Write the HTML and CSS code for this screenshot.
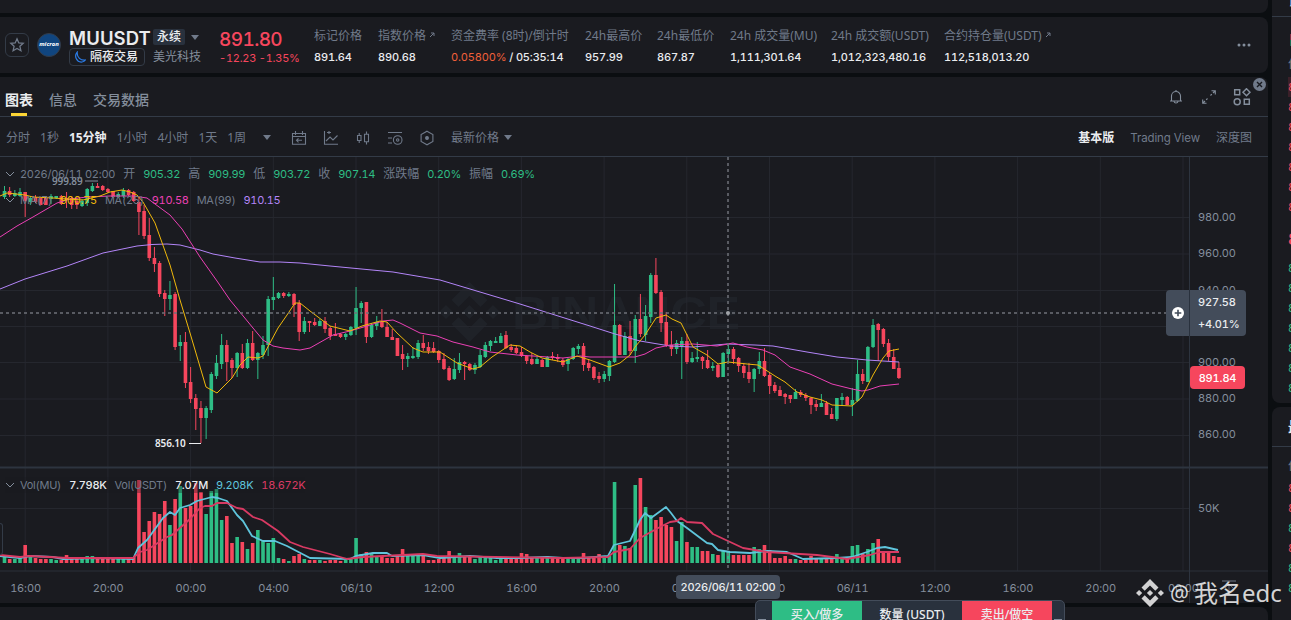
FILE: index.html
```html
<!DOCTYPE html>
<html lang="zh-CN">
<head>
    <meta charset="UTF-8">
    <meta name="viewport" content="width=device-width, initial-scale=1.0">
    <title>MUUSDT 永续 - Futures</title>
    <link rel="stylesheet" href="styles.css">
</head>
<body>
    <div class="page">
        <div class="main">
            <div class="panel top-strip"></div>

            <!-- Ticker -->
            <div class="panel ticker">
                <div class="star-btn">
                    <svg width="16" height="16" viewBox="0 0 16 16"><path d="M8 1.8l1.8 4.1 4.4.4-3.3 3 1 4.4L8 11.4l-3.9 2.3 1-4.4-3.3-3 4.4-.4z" fill="none" stroke="#707a8a" stroke-width="1.3"/></svg>
                </div>
                <div class="coin-logo">micron</div>
                <div class="symbol">
                    <div class="symbol-row">
                        <span class="symbol-name">MUUSDT</span>
                        <span class="badge">永续</span>
                        <span class="caret"></span>
                    </div>
                    <div class="symbol-row second">
                        <span class="night">
                            <svg width="12" height="12" viewBox="0 0 12 12"><path d="M3.2 1.2C-.2 5.2 2.6 11.6 8 11c1.500-.2 2.600-.9 3.400-2C6.800 9.600 2.800 6.600 3.200 1.200z" fill="none" stroke="#2b7de9" stroke-width="1.2"/></svg>
                            隔夜交易
                        </span>
                        <span class="company">美光科技</span>
                    </div>
                </div>
                <div class="price">
                    <div class="price-last">891.80</div>
                    <div class="price-change">-12.23 -1.35%</div>
                </div>
                <div class="stats">
                    <div class="stat"><label>标记价格</label><b>891.64</b></div>
                    <div class="stat"><label>指数价格 <svg class="ext" viewBox="0 0 6 6"><path d="M1 5L5 1M2 1h3v3"/></svg></label><b>890.68</b></div>
                    <div class="stat"><label>资金费率 (8时)/倒计时</label><b><i>0.05800%</i> / 05:35:14</b></div>
                    <div class="stat"><label>24h最高价</label><b>957.99</b></div>
                    <div class="stat"><label>24h最低价</label><b>867.87</b></div>
                    <div class="stat"><label>24h 成交量(MU)</label><b>1,111,301.64</b></div>
                    <div class="stat"><label>24h 成交额(USDT)</label><b>1,012,323,480.16</b></div>
                    <div class="stat"><label>合约持仓量(USDT) <svg class="ext" viewBox="0 0 6 6"><path d="M1 5L5 1M2 1h3v3"/></svg></label><b>112,518,013.20</b></div>
                </div>
                <svg class="more" width="14" height="4" viewBox="0 0 14 4"><circle cx="2" cy="2" r="1.500"/><circle cx="7" cy="2" r="1.500"/><circle cx="12" cy="2" r="1.500"/></svg>
            </div>

            <!-- Chart panel -->
            <div class="panel chart-panel">
                <div class="tabs">
                    <span class="tab active">图表</span>
                    <span class="tab">信息</span>
                    <span class="tab">交易数据</span>
                    <div class="tab-icons">
                        <svg width="16" height="16" viewBox="0 0 16 16"><path d="M2 12h12M3.500 12V7a4.500 4.500 0 0 1 9 0v5M6 12.500c.4 2 3.600 2 4 0M8 1v1.500"/></svg>
                        <svg width="16" height="16" viewBox="0 0 16 16"><path d="M9.500 6.500l1.300-1.300M12 4l2-2M10.500 1.700h3.800v3.800M6.500 9.500l-1.300 1.300M4 12l-2 2M1.700 10.500v3.800h3.800"/></svg>
                        <svg width="18" height="18" viewBox="0 0 18 18"><path d="M1.700 1.700h5v5h-5zM11.300 11.300h5v5h-5zM13.500.7L17 4.200l-3.500 3.500L10 4.200z" stroke-width="1.500"/><circle cx="4.200" cy="13.800" r="3" stroke-width="1.500"/></svg>
                    </div>
                    <div class="close-dot">
                        <svg width="7" height="7" viewBox="0 0 7 7"><path d="M1 1l5 5M6 1L1 6" stroke="#181a20" stroke-width="1.400"/></svg>
                    </div>
                </div>

                <div class="toolbar">
                    <div class="intervals">
                        <span>分时</span><span>1秒</span><span class="on">15分钟</span><span>1小时</span><span>4小时</span><span>1天</span><span>1周</span>
                    </div>
                    <span class="caret"></span>
                    <div class="tools">
                        <svg width="16" height="16" viewBox="0 0 16 16"><path d="M1.500 3.500h13v10.800h-13zM1.500 6.500h13M4.500 1v4M11.500 1v4M11 10.300H5.500M7.500 8.300l-2 2 2 2"/></svg>
                        <svg width="16" height="16" viewBox="0 0 16 16"><path d="M1.500 1v13.300H15M3 11l4-4 3 3 4.500-4.500M4 2.500h4M6 1v3"/></svg>
                        <svg width="16" height="16" viewBox="0 0 16 16"><path d="M2.500 5.500h3.500v5H2.500zM4.200 3v2.500M4.200 10.500V13M9.500 4.200h4v7.600h-4zM11.500 1.500v2.700M11.500 11.800v2.700"/></svg>
                        <svg width="16" height="16" viewBox="0 0 16 16"><path d="M1 2.500h14M1 8h4M1 13h4"/><circle cx="10.700" cy="10" r="4.300"/><circle cx="10.700" cy="10" r="1.200"/></svg>
                        <svg width="16" height="16" viewBox="0 0 16 16"><path d="M8 1.200l5.900 3.400v6.800L8 14.800l-5.900-3.400V4.600z"/><circle cx="8" cy="8" r="1.400" fill="#707a8a"/></svg>
                    </div>
                    <span class="latest">最新价格</span>
                    <span class="caret"></span>
                    <div class="views">
                        <span class="on">基本版</span><span class="latin">Trading View</span><span>深度图</span>
                    </div>
                </div>

                <div class="chart">
                    <svg id="chart" width="1268" height="446" viewBox="0 157 1268 446"></svg>
                    <div class="legend legend-ohlc">
                        <svg class="chev" viewBox="0 0 10 6"><path d="M1 1l4 4 4-4"/></svg>
                        <span>2026/06/11 02:00</span><span class="cn">开</span><em>905.32</em><span class="cn">高</span><em>909.99</em><span class="cn">低</span><em>903.72</em><span class="cn">收</span><em>907.14</em><span class="cn">涨跌幅</span><em>0.20%</em><span class="cn">振幅</span><em>0.69%</em>
                    </div>
                    <div class="legend legend-ma">
                        <svg class="chev" viewBox="0 0 10 6"><path d="M1 1l4 4 4-4"/></svg>
                        <span>MA(7)</span><em class="ma7">900.75</em><span>MA(25)</span><em class="ma25">910.58</em><span>MA(99)</span><em class="ma99">910.15</em>
                    </div>
                    <div class="legend legend-vol">
                        <svg class="chev" viewBox="0 0 10 6"><path d="M1 1l4 4 4-4"/></svg>
                        <span>Vol(MU)</span><em class="white">7.798K</em><span>Vol(USDT)</span><em class="white">7.07M</em><em class="cyan">9.208K</em><em class="crimson">18.672K</em>
                    </div>
                    <div class="side-handle"></div>
                    <div class="cross-price">
                        <div class="plus">
                            <svg width="12" height="12" viewBox="0 0 12 12"><circle cx="6" cy="6" r="6" fill="#fff"/><path d="M6 2.700v6.600M2.700 6h6.600" stroke="#434c5a" stroke-width="1.600"/></svg>
                        </div>
                        <div class="cross-values"><span>927.58</span><span>+4.01%</span></div>
                    </div>
                    <div class="last-price">891.84</div>
                    <div class="cross-time">2026/06/11 02:00</div>
                </div>
            </div>

            <div class="panel bottom-strip"></div>
        </div>

        <!-- Order book, cut off by the window edge -->
        <div class="side">
            <div class="panel book">
                <div class="book-head">订</div>
                <div class="book-mode"><i></i></div>
                <div class="book-label">价格</div>
                <div class="asks"><span class="hit">891</span><span>891</span><span>891</span><span>891</span><span>891</span><span>891</span><span>891</span></div>
                <div class="book-last">891</div>
                <div class="bids"><span>891</span><span>891</span><span>891</span><span>891</span><span>891</span><span>891</span><span>891</span></div>
            </div>
            <div class="panel trades">
                <div class="trades-head">最新成交</div>
                <div class="book-label">价格</div>
                <div class="trade-rows"><span class="r">891</span><span class="r">891</span><span>891</span><span class="r">891</span><span>891</span><span>891</span></div>
            </div>
        </div>
    </div>

    <!-- Quick order bar -->
    <div class="quick-order">
        <div class="grip"></div>
        <div class="buy">买入/做多</div>
        <div class="qty">数量 (USDT)</div>
        <div class="sell">卖出/做空</div>
        <div class="grip end"></div>
    </div>

    <div class="signature">
        <svg width="28" height="28" viewBox="0 0 28 28"><path d="M14 0l8.500 8.500-3.200 3.200L14 6.400l-5.300 5.300-3.200-3.200zM14 28l8.500-8.500-3.200-3.200-5.300 5.300-5.300-5.300-3.200 3.200zM14 10.900l3.100 3.100-3.100 3.100-3.100-3.100zM3.100 10.900L6.200 14l-3.100 3.100L0 14zM24.900 10.900L28 14l-3.100 3.100-3.100-3.100z"/></svg>
        <span class="at">@</span><span>我名edc</span>
    </div>

    <script src="chart.js"></script>
</body>
</html>
```
FILE: styles.css
```css
* {
    box-sizing: border-box;
}

body {
    margin: 0;
    height: 620px;
    overflow: hidden;
    position: relative;
    background: #0b0e11;
    color: #707a8a;
    font-family: "Noto Sans", "Noto Sans CJK SC", sans-serif;
    font-size: 12px;
    line-height: 16px;
}

.page {
    display: flex;
    gap: 4px;
    height: 620px;
}

.main {
    width: 1268px;
    flex: none;
    display: flex;
    flex-direction: column;
    gap: 4px;
}

.panel {
    background: #1a1b20;
    border-radius: 8px;
}

.top-strip {
    height: 13px;
    border-radius: 0 0 8px 0;
    flex: none;
}

/* Numbers and latin text */
.symbol-name,
.price,
.stat b,
.latin,
.legend,
.chart text,
.cross-price,
.last-price,
.cross-time,
.asks,
.bids,
.book-last,
.trade-rows {
    font-family: Inter, "Noto Sans CJK SC", sans-serif;
    font-size: 11px;
    font-variant-numeric: tabular-nums;
    letter-spacing: -0.15px;
}

/* Ticker */
.ticker {
    height: 56px;
    flex: none;
    display: flex;
    align-items: center;
    padding-left: 5px;
    border-radius: 0 8px 8px 0;
    position: relative;
}

.star-btn {
    width: 24px;
    height: 24px;
    border: 1px solid #333b47;
    border-radius: 6px;
    display: flex;
    align-items: center;
    justify-content: center;
}

.coin-logo {
    width: 24px;
    height: 24px;
    margin-left: 8px;
    border-radius: 50%;
    background: #10457f;
    border: 1px solid #333b47;
    color: #fff;
    font-size: 6px;
    font-weight: 700;
    font-style: italic;
    line-height: 21px;
    text-align: center;
}

.symbol {
    margin-left: 8px;
    width: 150px;
    padding-top: 3px;
}

.symbol-row {
    display: flex;
    align-items: center;
    height: 20px;
    white-space: nowrap;
}

.symbol-row.second {
    height: 19px;
    gap: 8px;
    padding-top: 1px;
}

.symbol-name {
    font-size: 18.5px;
    font-weight: 600;
    color: #eaecef;
    width: 84px;
    letter-spacing: 0.1px;
    padding-top: 2px;
}

.badge {
    background: #29313d;
    color: #eaecef;
    font-weight: 500;
    padding: 0 4px;
    border-radius: 2px;
    margin-right: 6px;
}

.caret {
    border: 4px solid transparent;
    border-top: 5px solid #707a8a;
    border-bottom: 0;
}

.night {
    width: 76px;
    height: 18px;
    border: 1px solid #333b47;
    border-radius: 4px;
    display: flex;
    align-items: center;
    gap: 4px;
    padding-left: 4px;
    color: #eaecef;
    font-weight: 500;
}

.company {
    color: #848e9c;
}

.price {
    width: 95px;
    padding-top: 7px;
}

.price-last {
    font-size: 19px;
    line-height: 20px;
    color: #f6465d;
    font-weight: 500;
    letter-spacing: -0.6px;
}

.price-change {
    color: #f6465d;
    line-height: 17px;
    letter-spacing: -0.25px;
    white-space: nowrap;
}

.stats {
    display: grid;
    grid-template-columns: 64px 73px 134px 72px 73px 101px 113px 120px;
}

.stat {
    display: flex;
    flex-direction: column;
    gap: 5px;
    padding-top: 3px;
    white-space: nowrap;
}

.stat b {
    color: #eaecef;
    font-weight: 500;
}

.stat i {
    color: #f0603a;
    font-style: normal;
    font-weight: 400;
}

.ext {
    width: 6px;
    height: 6px;
    fill: none;
    stroke: #707a8a;
    vertical-align: 2px;
}

.more {
    position: absolute;
    right: 17px;
    top: 26px;
    fill: #848e9c;
}

/* Tabs and toolbar */
.chart-panel {
    height: 526px;
    flex: none;
    border-radius: 0 8px 8px 0;
}

.tabs {
    position: relative;
    display: flex;
    height: 40px;
    gap: 16px;
    padding: 0 17px 0 5px;
    border-bottom: 1px solid #333b47;
    font-size: 14px;
    font-weight: 500;
    color: #848e9c;
}

.tab {
    line-height: 45px;
    position: relative;
}

.tab.active {
    color: #eaecef;
    font-weight: 700;
}

.tab.active::after {
    content: "";
    position: absolute;
    left: 6px;
    bottom: 0;
    width: 16px;
    height: 3px;
    background: #fcd535;
}

.tab-icons {
    margin-left: auto;
    display: flex;
    align-items: center;
    gap: 16.5px;
}

.tab-icons svg,
.tools svg {
    fill: none;
    stroke: #848e9c;
    stroke-width: 1.1;
}

.close-dot {
    position: absolute;
    right: 2px;
    top: 1px;
    width: 13px;
    height: 13px;
    border-radius: 50%;
    background: #707a8a;
    display: flex;
    align-items: center;
    justify-content: center;
}

.toolbar {
    height: 40px;
    padding: 2px 16px 0 6px;
    display: flex;
    align-items: center;
    border-bottom: 1px solid #333b47;
    white-space: nowrap;
}

.intervals {
    display: flex;
    gap: 10px;
    width: 257px;
}

.toolbar .on {
    color: #eaecef;
    font-weight: 700;
}

.toolbar .latin {
    font-size: 11.5px;
    letter-spacing: -0.1px;
}

.tools {
    display: flex;
    gap: 16px;
    margin-left: 20px;
}

.tools svg {
    stroke: #707a8a;
}

.latest {
    margin: 0 5px 0 16px;
}

.views {
    display: flex;
    gap: 16px;
    margin-left: auto;
}

/* Chart */
.chart {
    position: relative;
    height: 446px;
}

.chart > svg {
    display: block;
}

.chart text {
    fill: #848e9c;
}

.chart .watermark {
    font-family: "Liberation Sans", sans-serif;
    font-weight: 700;
    font-size: 46px;
    fill: #1f2228;
}

.chart .extreme {
    font-family: "Noto Sans", sans-serif;
    font-size: 10px;
    font-weight: 600;
}

.legend {
    position: absolute;
    left: 5px;
    display: flex;
    align-items: center;
    gap: 8px;
    white-space: nowrap;
    letter-spacing: -0.27px;
}

.legend em {
    font-style: normal;
    color: #2ebd85;
}

.legend .cn {
    font-size: 12px;
    letter-spacing: 0;
}

.legend .chev + span {
    margin-left: -3px;
}

.chev {
    width: 10px;
    height: 6px;
    fill: none;
    stroke: #848e9c;
}

.legend-ohlc {
    top: 9px;
}

.legend-ma {
    top: 35px;
}

.legend-vol {
    top: 320px;
    background: rgba(26, 27, 32, 0.35);
}

.legend .ma7 { color: #f0b90b; }
.legend .ma25 { color: #eb40b5; }
.legend .ma99 { color: #b385f8; }
.legend .cyan { color: #5fc5dc; }
.legend .crimson { color: #d93a63; }

.legend .white {
    color: #eaecef;
    font-weight: 500;
}

.side-handle {
    position: absolute;
    left: 0;
    top: 366px;
    width: 3px;
    height: 32px;
    border: 1px solid #333b47;
    border-left: 0;
    border-radius: 0 4px 4px 0;
}

.cross-price {
    position: absolute;
    left: 1166px;
    top: 133px;
    width: 80px;
    height: 46px;
    border-radius: 4px;
    background: #434c5a;
    display: flex;
    color: #eaecef;
    font-weight: 500;
}

.plus {
    width: 24px;
    display: flex;
    align-items: center;
    justify-content: center;
    border-right: 1px solid #29313d;
}

.cross-values {
    display: flex;
    flex-direction: column;
    line-height: 22px;
    padding: 1px 0 0 8px;
}

.last-price {
    position: absolute;
    left: 1190px;
    top: 209px;
    width: 55px;
    height: 23px;
    border-radius: 4px;
    background: #f6465d;
    color: #fff;
    font-weight: 500;
    line-height: 24px;
    text-align: center;
}

.cross-time {
    position: absolute;
    left: 676px;
    top: 418px;
    width: 104px;
    height: 24px;
    border-radius: 4px;
    background: #434c5a;
    color: #eaecef;
    font-weight: 500;
    line-height: 24px;
    text-align: center;
    white-space: nowrap;
    letter-spacing: -0.3px;
}

.bottom-strip {
    flex: 1;
    border-radius: 0 8px 0 0;
}

/* Order book */
.side {
    width: 19px;
    display: flex;
    flex-direction: column;
    gap: 4px;
    overflow: hidden;
}

.side span,
.side .book-label,
.side .book-last,
.side .book-head,
.side .trades-head {
    display: block;
    padding-left: 16px;
    white-space: nowrap;
    overflow: hidden;
}

.book {
    height: 403px;
    border-radius: 0 0 0 8px;
    flex: none;
}

.book-head {
    height: 17px;
    line-height: 4px;
    border-bottom: 1px solid #333b47;
    color: #eaecef;
}

.book-mode {
    height: 37px;
    padding: 17px 0 0 18px;
}

.book-mode i {
    display: block;
    width: 8px;
    height: 12px;
    background: linear-gradient(#7d2c40 50%, #1d6b52 50%);
}

.book-label {
    height: 23px;
    line-height: 20px;
}

.asks span,
.bids span,
.trade-rows span {
    height: 20px;
    line-height: 21px;
    color: #2ebd85;
}

.asks span,
.trade-rows .r {
    color: #f6465d;
}

.asks .hit {
    background: linear-gradient(90deg, transparent 16px, #3b2029 16px);
}

.book-last {
    height: 41px;
    line-height: 45px;
    font-size: 16px;
    font-weight: 600;
    color: #f6465d;
}

.trades {
    flex: 1;
    border-radius: 8px 0 0 0;
}

.trades-head {
    height: 40px;
    line-height: 40px;
    border-bottom: 1px solid #333b47;
    font-size: 14px;
    font-weight: 700;
    color: #eaecef;
}

.trades .book-label {
    height: 31px;
    line-height: 38px;
}

/* Quick order bar */
.quick-order {
    position: absolute;
    left: 755px;
    top: 600px;
    width: 310px;
    height: 30px;
    display: flex;
    border: 1px solid #434c5a;
    border-radius: 5px 5px 0 0;
    background: #29313d;
    color: #eaecef;
    font-weight: 500;
    line-height: 28px;
    text-align: center;
}

.quick-order .buy {
    width: 90px;
    background: #2ebd85;
}

.quick-order .qty {
    width: 100px;
}

.quick-order .sell {
    width: 90px;
    background: #f6465d;
}

.grip {
    width: 16px;
    padding: 18px 0 0 2px;
}

.grip::before {
    content: "";
    display: block;
    width: 8px;
    height: 1px;
    background: #848e9c;
}

.grip.end {
    width: 12px;
}

.signature {
    position: absolute;
    left: 1136px;
    top: 578px;
    display: flex;
    align-items: center;
    color: rgba(255, 255, 255, 0.82);
    font-size: 24px;
    line-height: 30px;
    white-space: nowrap;
}

.signature svg {
    fill: #d2d2d3;
    margin-right: 6px;
}

.signature .at {
    font-size: 21px;
    margin-right: 5px;
}
```
FILE: chart.js
```js
// direction, high, body top, body bottom, low
const candles = `
g 186 191 197 199|r 187 191 195 197|g 190 193 196 197|g 188 192 196 197|r 192 192 201 217|g 196 198 202 205|r 195 197 202 203|r 197 198 205 205
r 197 198 205 205|g 194 196 199 204|g 196 196 198 199|r 195 196 204 205|r 192 198 200 208|r 197 198 205 209|r 198 201 205 209|g 199 201 206 207
g 188 189 203 206|g 183 186 191 192|r 183 186 188 188|r 185 186 190 191|r 188 189 192 193|r 191 191 197 198|g 192 194 197 198|g 188 190 196 198
r 189 190 195 196|r 191 192 201 202|r 197 202 212 235|r 205 211 236 239|r 218 235 258 261|r 247 258 264 272|r 261 263 294 297|r 290 293 299 316
g 281 295 299 310|r 292 294 347 350|g 335 342 346 361|r 332 342 383 388|r 367 382 399 403|r 394 398 409 430|r 401 408 418 443|g 406 408 418 439
g 372 374 410 413|g 355 363 376 379|g 334 345 364 369|r 340 345 362 381|r 358 360 368 378|g 352 353 368 377|r 344 353 368 369|g 339 343 368 369
r 331 343 360 361|g 352 353 360 379|g 336 345 355 359|g 296 299 345 356|g 277 297 300 310|g 292 293 298 299|r 292 293 296 298|g 292 294 296 297
r 293 294 305 317|r 300 303 332 341|g 317 321 332 334|r 321 321 323 332|r 318 322 325 326|g 319 321 326 326|r 317 321 329 333|r 326 328 336 340
r 323 334 336 336|r 333 334 337 338|g 333 334 337 340|g 326 327 335 336|g 287 308 328 335|g 301 303 308 323|r 302 302 337 343|g 323 325 337 338
g 316 322 326 330|r 309 322 327 328|r 322 327 337 337|r 329 337 340 340|r 338 338 356 356|r 345 354 359 370|g 353 356 359 367|g 347 356 358 359
g 340 343 357 359|r 335 343 348 351|r 342 347 351 354|r 342 348 352 353|r 350 351 360 363|r 353 359 369 370|r 366 368 380 381|g 358 369 379 380
g 353 362 370 373|r 361 362 364 380|r 363 364 370 371|g 363 365 370 374|g 350 355 367 368|g 342 345 357 358|g 340 341 346 351|g 337 341 343 343
g 333 336 343 343|r 331 335 348 349|r 344 347 350 352|r 345 348 353 354|r 347 352 356 357|r 355 356 361 364|r 353 359 364 365|g 357 359 364 364
r 359 360 367 367|g 356 357 367 367|r 352 356 358 360|r 354 357 359 362|r 358 360 365 367|g 358 359 364 371|g 347 348 359 360|g 344 346 349 354
r 343 346 365 371|r 360 363 368 371|r 366 367 378 380|r 372 376 379 383|g 371 374 379 382|g 360 361 376 381|g 284 325 362 363|r 324 325 355 355
g 332 336 355 355|r 321 336 351 355|g 315 319 351 363|r 294 319 334 337|g 305 316 335 341|g 273 275 317 323|r 258 275 293 294|r 290 292 323 332
r 312 322 345 347|r 331 345 349 356|g 340 343 349 354|g 337 341 346 379|r 334 341 362 364|g 352 358 362 363|g 342 357 359 362|r 356 357 361 369
r 350 360 368 369|g 362 366 368 371|r 364 365 377 378|g 352 353 377 377|g 343 349 354 362|r 347 349 359 364|r 357 358 366 372|r 363 366 373 378
r 363 372 379 383|g 368 369 379 392|g 352 361 369 374|r 348 361 376 377|r 373 375 386 394|r 382 385 391 393|r 386 390 396 396|r 393 394 397 404
r 395 395 399 403|g 389 392 399 399|r 390 392 395 397|r 393 395 398 401|r 397 398 405 414|r 400 404 407 411|g 394 403 407 407|r 401 403 415 415
r 408 414 419 419|g 398 398 419 421|g 393 397 400 406|r 396 397 405 405|g 388 400 405 416|g 360 374 401 402|r 369 374 381 384|g 346 347 382 382
g 319 325 347 348|r 323 324 330 361|r 328 329 344 347|r 339 343 357 361|r 349 357 369 369|r 362 368 378 379
`.trim().split(/[|\n]/).map(c => c.split(' '));

const volumes = [
    6, 4, 4, 5, 18, 8, 5, 4, 4, 4, 3, 3, 8, 4, 4, 6, 7, 7, 6, 4, 4, 4, 4, 4, 4, 6, 83, 31, 42, 51,
    49, 62, 38, 64, 77, 55, 57, 80, 71, 49, 72, 74, 43, 47, 20, 26, 21, 14, 20, 33, 23, 20, 25, 5, 4, 2, 7, 9, 4, 3,
    3, 3, 2, 3, 3, 2, 3, 5, 25, 9, 11, 9, 7, 6, 5, 5, 7, 14, 7, 7, 7, 7, 3, 3, 4, 5, 12, 7, 10, 7,
    6, 4, 6, 6, 6, 3, 6, 6, 5, 5, 10, 9, 5, 5, 5, 7, 6, 4, 4, 4, 4, 4, 10, 6, 6, 9, 7, 7, 81, 18,
    17, 15, 78, 85, 56, 48, 43, 46, 38, 36, 22, 41, 21, 16, 16, 12, 12, 9, 8, 12, 11, 8, 8, 8, 8, 16, 14, 18, 13, 5,
    5, 7, 4, 4, 3, 3, 7, 4, 4, 4, 5, 9, 4, 6, 17, 18, 9, 14, 20, 24, 11, 10, 7, 6
];

const lines = [
    ['#b385f8', 1, '0,289 25,279 67,266 103,253 137,246 152,244.500 167,244 180,245 200,250 213,254 235,258 260,262 280,262 300,263 330,266 393,272 440,280 520,304 590,326 615,334 640,341 670,346 693,347 727,344 755,345 773,346 807,352 837,357 867,360 899,362'],
    ['#eb40b5', 1, '0,237 17,226 33,217 57,203 70,199 87,197 110,196 133,196 147,198 155,204 170,215 182,229 200,257 217,281 230,300 253,328 263,340 273,346 283,348 300,350 310,348 333,335 350,331 367,326 383,321 393,320 400,323 420,333 437,336 453,342 473,347 490,352 517,355 533,356 563,358 580,356 590,357 635,357 645,354 656,348 670,345 693,344 717,346 733,343 747,347 763,350 775,355 790,367 810,374 832,384 852,389 862,391 868,390 880,386 899,384'],
    ['#f0b90b', 1, '0,196 7,193 25,195 33,197 53,198 67,199 83,200 100,196 110,192 122,190 130,192 137,195 143,202 155,223 170,265 180,300 190,333 206,387 217,393 232,378 240,365 248,357 258,358 263,356 278,328 287,315 295,303 300,303 310,311 330,326 350,331 362,326 380,321 387,322 397,333 413,348 423,352 440,352 457,363 473,369 480,367 492,357 510,345 520,346 530,352 542,358 563,362 577,356 590,360 609,367 620,363 630,355 635,347 645,335 656,318 666,315 672,319 681,323 693,347 707,355 718,364 728,362 747,364 758,365 775,376 785,382 797,392 810,397 822,400 832,405 852,406 862,397 873,375 883,358 889,351 899,349'],
    ['#5fc5dc', 1.8, '0,556 20,558 30,556 53,557 63,559 100,558 133,559 138,548 147,540 163,518 170,512 175,515 180,508 190,505 197,501 212,497 218,498 227,501 237,515 243,521 252,536 263,541 275,541 287,546 310,558 350,559 356,556 373,553 387,553 392,556 423,555 440,558 470,556 497,558 520,558 547,557 563,558 583,558 608,556 614,545 630,541 640,520 645,513 651,518 666,507 671,513 677,521 687,528 707,543 712,544 718,550 730,552 750,553 767,551 787,552 803,559 837,558 852,557 867,552 877,548 885,547 898,550'],
    ['#d93a63', 1.8, '0,555 20,557 30,556 50,557 67,558 133,558 140,552 147,550 167,537 172,535 190,519 200,508 205,506 212,506 217,503 227,503 237,508 243,509 253,517 262,520 278,531 290,542 303,547 330,554 347,559 363,557 423,554 437,556 563,558 608,557 614,552 630,549 640,538 660,527 670,522 677,521 681,518 687,522 702,523 707,528 713,534 743,548 767,552 817,555 847,559 870,555 880,552 899,552']
];

const svg = document.getElementById('chart');
const step = 5.17;
let out = '';

function line(x1, y1, x2, y2, color, width, extra) {
    out += `<line x1="${x1}" y1="${y1}" x2="${x2}" y2="${y2}" stroke="${color}" stroke-width="${width}" ${extra || ''}/>`;
}

// watermark
out += '<g fill="#1f2228"><path d="M469.500 282l18 18-7 7-11-11-11 11-7-7zM469.500 342l18-18-7-7-11 11-11-11-7 7zM469.500 305l7 7-7 7-7-7zM446 305l7 7-7 7-7-7zM493 305l7 7-7 7-7-7z"/></g>';
out += '<text class="watermark" x="512" y="329" textLength="228" lengthAdjust="spacingAndGlyphs">BINANCE</text>';

// grid
for (let i = 0; i < 15; i++) {
    line(25.2 + i * 82.7, 157, 25.2 + i * 82.7, 571, '#25272e', 1);
}
[217.5, 254, 290.5, 326.5, 362.5, 399, 435.5, 508.5].forEach(y => line(0, y, 1189, y, '#25272e', 1));
line(0, 467.5, 1268, 467.5, '#2d343f', 2);
line(0, 571, 1268, 571, '#2b3038', 1);
line(1189.5, 157, 1189.5, 603, '#2d343f', 1);

// candles and volume bars
candles.forEach(([dir, high, top, bottom, low], i) => {
    const x = 4.5 + i * step;
    const color = dir === 'g' ? '#2ebd85' : '#f6465d';
    line(x, high, x, low, color, 1);
    out += `<rect x="${x - 1.8}" y="${top}" width="3.600" height="${Math.max(bottom - top, 1)}" fill="${color}"/>`;
    out += `<rect x="${x - 1.8}" y="${563 - volumes[i]}" width="3.600" height="${volumes[i]}" fill="${color}"/>`;
});

lines.forEach(([color, width, points]) => {
    out += `<polyline points="${points}" fill="none" stroke="${color}" stroke-width="${width}" stroke-linejoin="round"/>`;
});

// highest and lowest price
out += '<text class="extreme" x="52" y="185">999.89</text>';
line(85, 181, 98, 181, '#848e9c', 1);
out += '<text class="extreme" x="155" y="447" style="fill:#eaecef">856.10</text>';
line(189, 443.5, 201, 443.5, '#eaecef', 1);

// crosshair
line(0, 313, 1166, 313, '#6f7278', 1.5, 'stroke-dasharray="3 3"');
line(728, 157, 728, 568, '#6f7278', 1.5, 'stroke-dasharray="3 3"');
out += '<circle cx="728" cy="313" r="2" fill="#a0a3a8"/>';

// axes
[['980.00', 221], ['960.00', 257], ['940.00', 294], ['900.00', 366], ['880.00', 402], ['860.00', 438], ['50K', 512]].forEach(([t, y]) => {
    out += `<text x="1198" y="${y}">${t}</text>`;
});
['16:00', '20:00', '00:00', '04:00', '06/10', '12:00', '16:00', '20:00', '00:00', '04:00', '06/11', '12:00', '16:00', '20:00', '00:00'].forEach((t, i) => {
    out += `<text x="${25.5 + i * 82.7}" y="592" text-anchor="middle">${t}</text>`;
});
line(1222, 581, 1236, 581, '#5b6370', 1.3);
out += '<path d="M1229 584v10M1225 588l4-4 4 4" fill="none" stroke="#5b6370"/>';

svg.innerHTML = out;
```
